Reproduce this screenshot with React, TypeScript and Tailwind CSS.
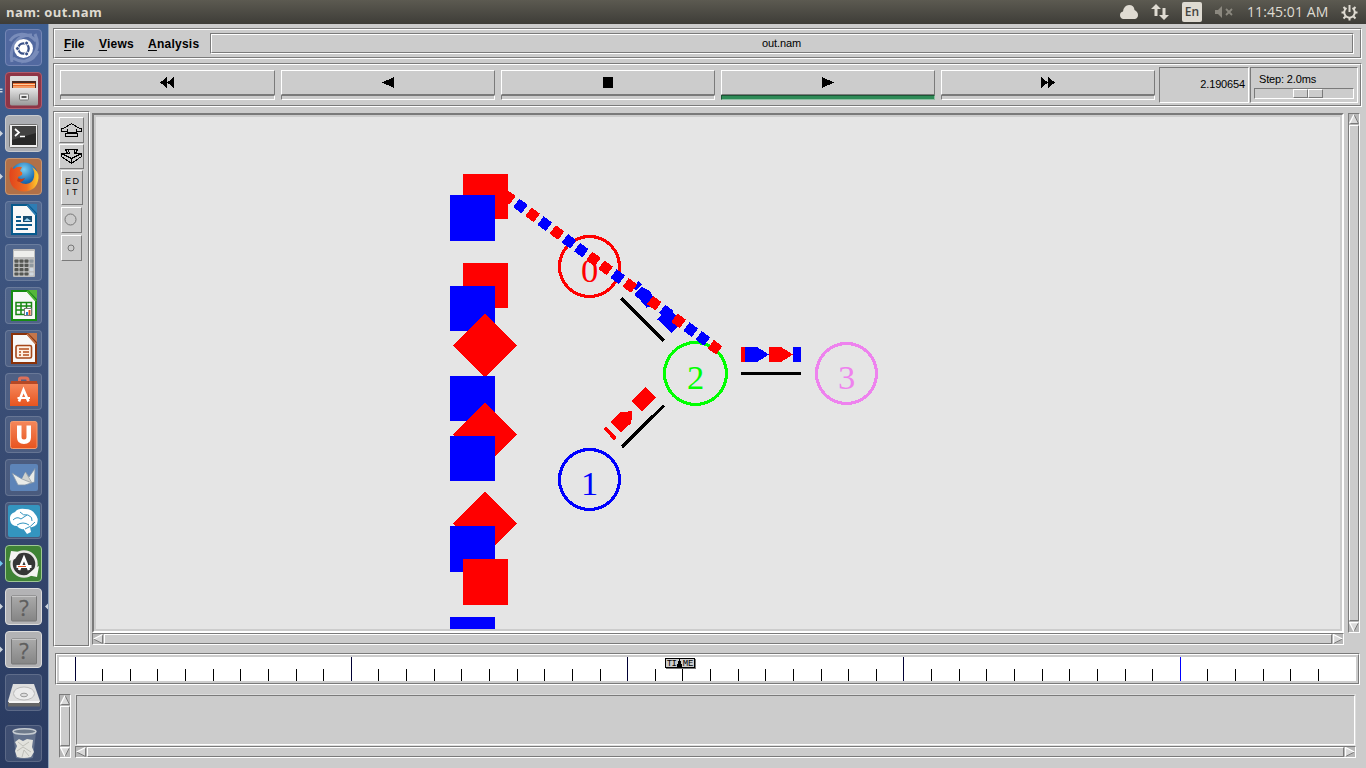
import React from "react";

const SUNK = "border border-t-[#7a7a7a] border-l-[#7a7a7a] border-b-white border-r-white";
const RAISED = "border border-t-white border-l-white border-b-[#7a7a7a] border-r-[#7a7a7a]";

function Groove({ className = "", inner = "", children }: { className?: string; inner?: string; children?: React.ReactNode }) {
  return (
    <div className={`shrink-0 ${SUNK} ${className}`}>
      <div className={`h-full w-full ${RAISED} ${inner}`}>{children}</div>
    </div>
  );
}

type Dir = "up" | "down" | "left" | "right";

function Arrow({ dir }: { dir: Dir }) {
  const shapes: Record<Dir, React.ReactNode> = {
    up: (<><path d="M5 .5L9.5 9.5H.5z" fill="#d9d9d9" /><path d="M5 .5L9.5 9.5H.5" stroke="#7a7a7a" /><path d="M5 .5L.5 9.5" stroke="#fff" strokeWidth="1.3" /></>),
    down: (<><path d="M5 9.5L9.5 .5H.5z" fill="#d9d9d9" /><path d="M5 9.5L9.5 .5" stroke="#7a7a7a" /><path d="M9.5 .5H.5L5 9.5" stroke="#fff" strokeWidth="1.3" /></>),
    left: (<><path d="M.5 5L9.5 .5V9.5z" fill="#d9d9d9" /><path d="M.5 5L9.5 9.5V.5" stroke="#7a7a7a" /><path d="M.5 5L9.5 .5" stroke="#fff" strokeWidth="1.3" /></>),
    right: (<><path d="M9.5 5L.5 .5V9.5z" fill="#d9d9d9" /><path d="M9.5 5L.5 9.5" stroke="#7a7a7a" /><path d="M9.5 5L.5 .5V9.5" stroke="#fff" strokeWidth="1.3" /></>),
  };
  return (
    <svg width="10" height="10" viewBox="0 0 10 10" fill="none" className="shrink-0">
      {shapes[dir]}
    </svg>
  );
}

function Scroll({ vertical, className = "" }: { vertical?: boolean; className?: string }) {
  return (
    <div className={`flex shrink-0 gap-px bg-[#b8b8b8] ${SUNK} ${vertical ? "w-3 flex-col" : "h-3"} ${className}`}>
      <Arrow dir={vertical ? "up" : "left"} />
      <div className={`grow bg-[#cccccc] ${RAISED}`} />
      <Arrow dir={vertical ? "down" : "right"} />
    </div>
  );
}

function Tile({ tone = "border-white/15 bg-white/10", children }: { tone?: string; children: React.ReactNode }) {
  return (
    <div className={`h-[37px] w-[37px] shrink-0 rounded-[4px] border ${tone}`}>
      <svg width="35" height="35" viewBox="1 1 35 35">{children}</svg>
    </div>
  );
}

function DocIcon({ color, dark, children }: { color: string; dark: string; children: React.ReactNode }) {
  return (
    <>
      <path d="M6 3H24L32 12V34H6z" fill={dark} />
      <path d="M8 5H22L30 14V32H8z" fill="#f8f8f8" />
      <path d="M23 3H32V12z" fill={color} />
      <path d="M22 4L31 14" stroke={color} strokeWidth="1.5" />
      {children}
    </>
  );
}

function QuestionTile() {
  return (
    <Tile tone="border-[#dcdcdc] bg-[#b3b3b5]">
      <rect x="6.5" y="8" width="25" height="25" rx="1" fill="url(#qgrad)" stroke="#777" />
      <path d="M7 8.500H31" stroke="#c8c8c8" />
      <text x="19" y="28" textAnchor="middle" fontSize="22" fill="#5e5e5e" stroke="#5e5e5e" strokeWidth=".3" fontFamily="Open Sans, sans-serif">?</text>
    </Tile>
  );
}

function Launcher() {
  return (
    <aside className="relative flex h-[744px] w-[49px] shrink-0 flex-col gap-1.5 border-r border-[#8fa3bb] bg-linear-to-b from-[#3f5f92] via-[#3c5078] via-45% to-[#293a60] pt-[5px] pl-[5px]">
      <svg width="0" height="0" className="absolute">
        <defs>
          <linearGradient id="qgrad" x1="0" y1="0" x2="0" y2="1"><stop stopColor="#aaa" /><stop offset="1" stopColor="#858585" /></linearGradient>
          <linearGradient id="cab" x1="0" y1="0" x2="0" y2="1"><stop stopColor="#e6e6e6" /><stop offset="1" stopColor="#989898" /></linearGradient>
          <radialGradient id="globe" cx=".5" cy=".25" r=".7"><stop stopColor="#79cdf0" /><stop offset=".6" stopColor="#1e70b5" /><stop offset="1" stopColor="#123a78" /></radialGradient>
          <linearGradient id="fox" x1="0" y1="0" x2="1" y2="0"><stop stopColor="#e2441c" /><stop offset=".6" stopColor="#ee7022" /><stop offset="1" stopColor="#ffd22e" /></linearGradient>
          <linearGradient id="orange" x1="0" y1="0" x2="0" y2="1"><stop stopColor="#f5875a" /><stop offset="1" stopColor="#e8541f" /></linearGradient>
        </defs>
      </svg>
      <Tile tone="border-[#7486b5] bg-[#5269a0]">
        <path d="M7 33C4 18 12 5 27 6M30 5C36 18 30 31 16 33M5 12C10 4 22 2 31 12M33 22C28 33 18 35 8 29" fill="none" stroke="#9fb0d3" strokeWidth="3" opacity=".5" />
        <circle cx="18.500" cy="19.500" r="9.500" fill="#fff" />
        <circle cx="18.500" cy="19.500" r="5.200" fill="none" stroke="#3a5188" strokeWidth="2.300" />
        <g stroke="#fff" strokeWidth="1"><circle cx="12.400" cy="19.500" r="2" fill="#3a5188" /><circle cx="21.600" cy="14.100" r="2" fill="#3a5188" /><circle cx="21.600" cy="24.900" r="2" fill="#3a5188" /></g>
      </Tile>
      <Tile tone="border-[#b05c6c] bg-[#8e3546]">
        <path d="M5 5Q5 4 6 4H32Q33 4 33 5V17H5z" fill="#ddd" />
        <rect x="7" y="9" width="24" height="8" fill="#4b2a20" />
        <path d="M8 11H30V16H8z" fill="#e8692c" /><path d="M8 12.5H30M8 15H30" stroke="#ffd0a0" />
        <path d="M5 16H33V32Q33 33.500 31 33.500H7Q5 33.500 5 32z" fill="url(#cab)" />
        <rect x="14.5" y="22" width="9" height="6" rx="1" fill="#eee" stroke="#777" /><rect x="16.5" y="24" width="5" height="2" fill="#555" />
      </Tile>
      <Tile tone="border-[#c9cace] bg-[#acaeb3]">
        <rect x="4.5" y="9.5" width="28" height="23" rx="1" fill="#eee" stroke="#707070" />
        <rect x="7" y="11" width="24" height="19" fill="#282828" /><path d="M7 11H31V18L7 25z" fill="#424242" />
        <path d="M10 14L14 17.5L10 21" fill="none" stroke="#fff" strokeWidth="1.7" /><path d="M15 21.500H20" stroke="#fff" strokeWidth="1.5" />
      </Tile>
      <Tile tone="border-[#c79774] bg-[#b17048]">
        <circle cx="19" cy="18.5" r="14" fill="url(#globe)" />
        <path d="M6 9L9 11Q12 8 17 9L15 13Q18 14 17 17L13 19Q13 26 21 26Q28 25 29 19Q30 13 27 9Q34 13 33.5 20Q32 33 19 33.5Q6 33 4.5 20Q4 13 6 9z" fill="url(#fox)" />
        <path d="M13 20Q16 22 20 20Q17 26 12 23z" fill="#c83917" />
      </Tile>
      <Tile>
        <DocIcon color="#2e7db4" dark="#075a8d"><path d="M11 16H16M11 20H16M11 24H27M11 28H23" stroke="#0e5a8b" strokeWidth="2" /><rect x="18" y="15" width="9" height="6" fill="#174d72" /><path d="M19 20L22 17L26 20z" fill="#9bd3f2" /></DocIcon>
      </Tile>
      <Tile>
        <rect x="8" y="5" width="22" height="28" rx="1" fill="#bdbdbd" /><rect x="9" y="7" width="20" height="6" fill="#eeeeec" />
        {[0, 1, 2, 3].map((r) => [0, 1, 2, 3].map((c) => (
          <rect key={`${r}-${c}`} x={9.5 + c * 5} y={15.5 + r * 4.3} width="4" height="3.2" rx=".8" fill={c === 3 ? (r > 1 ? "#cfd8df" : "#8f999f") : "#555753"} />
        )))}
      </Tile>
      <Tile>
        <DocIcon color="#55b63b" dark="#168b12"><path d="M11 15.5H26.500V27.500H11zM11 19H27M11 23H27M16 15V28M21.500 15V28" stroke="#178712" strokeWidth="1.5" fill="none" /><rect x="19.5" y="21.500" width="7" height="7" fill="#fff" stroke="#777" /><path d="M22 28V25" stroke="#2c7ccc" strokeWidth="2" /><path d="M24.5 28V23" stroke="#e4541c" strokeWidth="2" /></DocIcon>
      </Tile>
      <Tile>
        <DocIcon color="#c5764b" dark="#8b3209"><rect x="11" y="15.500" width="15.5" height="12.500" rx="1.5" fill="#fff1e4" stroke="#a6481b" strokeWidth="1.6" /><path d="M14 19H24M18 22H24M18 25H24" stroke="#b44e1c" strokeWidth="1.7" /><path d="M14 22H16M14 25H16" stroke="#b44e1c" strokeWidth="1.7" /></DocIcon>
      </Tile>
      <Tile>
        <path d="M14.500 10V6Q14.500 5 16 5H21Q23 5 23 7V10" fill="none" stroke="#dd705a" strokeWidth="3" />
        <path d="M6 8H32L33 13H5z" fill="#b54825" /><path d="M5 11H33V33H5z" fill="url(#orange)" />
        <path d="M14 28.500L18.500 17L23.500 28.500" stroke="#fff" strokeWidth="2.600" fill="none" /><path d="M12.500 25H25" stroke="#fff" strokeWidth="2" />
      </Tile>
      <Tile>
        <rect x="5.5" y="5.5" width="26.500" height="27" rx="2" fill="url(#orange)" stroke="#f59a6d" />
        <path d="M12 9.500H16.500V21Q16.500 23.5 19 23.5Q21.500 23.5 21.500 21V9.500H26V21.500Q26 28 19 28Q12 28 12 21.500z" fill="#fff" />
      </Tile>
      <Tile>
        <rect x="5" y="5" width="28" height="27" rx="2" fill="#5d84b8" />
        <path d="M7 14L17 20L20.500 13L24 18L30 9.500L29.500 23L20 26H13z" fill="#e9ebe8" stroke="#7e92a8" strokeWidth=".8" /><path d="M17 20L27 24L20.500 13" fill="#cfd2cf" stroke="#8c97a1" strokeWidth=".7" />
      </Tile>
      <Tile>
        <rect x="3" y="3" width="32" height="32" rx="2" fill="#3495bf" />
        <path d="M5 18Q4 12 10 10Q13 6 20 7Q27 7 30 12Q34 16 32 22Q29 26 25 25L26 30L22 32L18.500 27Q15 28 12 24Q6 24 5 18z" fill="#fff" />
        <path d="M8 18Q12 14 16 17L22 13M15 10Q18 14 23 13Q28 15 27 19M12 23Q18 19 24 23M20 27Q26 25 30 20" fill="none" stroke="#3495bf" />
      </Tile>
      <Tile tone="border-[#9fc894] bg-[#3f8335]">
        <circle cx="19" cy="19" r="13.5" fill="#353535" /><circle cx="19" cy="19" r="12.5" fill="none" stroke="#e8e8e4" strokeWidth="2.5" />
        <path d="M4 16L6 6L15 7L10 14zM34 21L32 32L22 30L29 24z" fill="#f4f4f2" />
        <path d="M14 25L19 13L24 25" stroke="#fff" strokeWidth="2.6" fill="none" /><path d="M11.5 21.500H26.5" stroke="#fff" strokeWidth="3" /><path d="M13 21.500H21" stroke="#e95420" />
      </Tile>
      <QuestionTile />
      <QuestionTile />
      <Tile>
        <path d="M8 10H29L35 27V31H3V27z" fill="#dedede" /><path d="M3 28H35V32.500H3z" fill="#666" /><path d="M4 27H34V29H4z" fill="#f5f5f5" />
        <ellipse cx="19" cy="19.500" rx="10.500" ry="6.5" fill="#ebebeb" stroke="#bbb" /><ellipse cx="19" cy="21" rx="3.5" ry="1.800" fill="#ddd" stroke="#999" />
      </Tile>
      <div className="mt-2">
        <Tile>
          <path d="M8 7L11 33Q19 35 28 33L31 7z" fill="#8e9bad" opacity=".45" />
          <path d="M10 17L14 14L18 16L22 14L28 15L27 22L29 27L26 32Q19 34 12 32L10 26L12 21z" fill="#e2e2dd" />
          <path d="M13 17L18 21L24 17M12 26L18 22L26 27M17 32L19 25L24 31" stroke="#b5b5ae" fill="none" strokeWidth=".8" />
          <ellipse cx="19.5" cy="6.500" rx="11.500" ry="2.800" fill="#6e7a8b" stroke="#c5cbd1" strokeWidth="1.5" />
        </Tile>
      </div>
      <svg width="49" height="744" viewBox="0 24 49 744" className="pointer-events-none absolute top-0 left-0" fill="#ccd4dd">
        <path d="M0 88.500h2.500v1.500H0zM0 91h2.500v1.500H0zM0 130.500l3 3-3 3zM0 173.500l3 3-3 3zM0 603.500l3 3-3 3zM0 646.500l3 3-3 3zM48 603.500l-3 3 3 3z" />
        <path d="M0 560.500l3 3-3 3z" fill="#71c7ec" />
      </svg>
    </aside>
  );
}

function TitleBar() {
  return (
    <header className="flex h-6 items-center justify-between bg-linear-to-b from-[#5c5a51] to-[#3e3d38] pr-2 pl-1.5 font-['Open_Sans',sans-serif] text-[#dfdbd2]">
      <span className="text-[13px] leading-6 font-bold tracking-[0.4px]">nam: out.nam</span>
      <div className="flex items-center">
        <svg width="18" height="16" viewBox="0 0 18 16" fill="#dfdbd2" className="-ml-px mr-px"><path d="M3 15Q0 14 0 11Q0 8 3 7.500Q4 1 9 1Q14 1 14.500 6Q18 8 18 11Q18 14 15 15z" /></svg>
        <svg width="18" height="16" viewBox="0 0 18 16" fill="#dfdbd2" className="mr-px ml-[12px]"><path d="M5 0L10 5H6.500V12H3.500V5H0zM11.500 4H14.500V11H18L13 16L8 11H11.500z" /></svg>
        <span className="ml-3 flex h-5 w-5 items-center justify-center rounded-[2px] bg-[#dfdbd2] text-[12px] font-semibold text-[#45443e]">En</span>
        <svg width="18" height="14" viewBox="0 0 18 14" className="ml-[13px]" fill="#8b887f"><path d="M0 5H3L7 1V13L3 9H0z" /><path d="M11 4L17 10M17 4L11 10" stroke="#8b887f" strokeWidth="1.8" /></svg>
        <span className="ml-[14px] w-[82px] text-[14px] leading-6 tracking-[0.08px] whitespace-nowrap">11:45:01 AM</span>
        <svg width="17" height="17" viewBox="0 0 17 17" className="ml-3" fill="none" stroke="#dfdbd2">
          <path d="M5.500 4A5.300 5.300 0 1 0 11.500 4" strokeWidth="2" />
          <path d="M8.500 1V8" strokeWidth="2" />
          <path d="M2.500 3L4.500 5M14.500 3L12.500 5M.5 8.500H3.500M13.500 8.500H16.500M2.500 14.500L4.500 12.500M14.500 14.500L12.500 12.500M8.500 16.500V13.500" strokeWidth="2" />
        </svg>
      </div>
    </header>
  );
}

const CONTROLS = [
  { d: "M7 0V11L0 5.500zM14 0V11L7 5.500z", w: 14, width: "w-[215px]", nudge: "-ml-0.5" },
  { d: "M12 0V11L0 5.500z", w: 12, width: "w-[214px]" },
  { d: "M0 0H10V10.500H0z", w: 10, width: "w-[214px]" },
  { d: "M0 0V11L12 5.500z", w: 12, width: "w-[214px]", active: true },
  { d: "M0 0V11L7 5.500zM7 0V11L14 5.500z", w: 14, width: "w-[214px]" },
];

function Toolbar() {
  return (
    <Groove className="mt-1 h-11 w-[1309px]" inner="flex">
      <div className="mt-[5px] ml-[5px] flex w-[1095px] shrink-0 justify-between">
        {CONTROLS.map((c, i) => (
          <button key={i} className={`block h-[30px] ${c.width}`}>
            <div className={`flex h-[25px] items-center justify-center ${RAISED}`}>
              <svg width={c.w} height="11" viewBox={`0 0 ${c.w} 11`} shapeRendering="crispEdges" className={c.nudge ?? ""}><path d={c.d} /></svg>
            </div>
            <div className={`h-[5px] ${c.active ? "border border-t-[#1c5535] border-r-[#8dbea2] border-b-[#8dbea2] border-l-[#1c5535] bg-[#2e8b57]" : SUNK}`} />
          </button>
        ))}
      </div>
      <div className={`mt-0.5 ml-1 flex h-9 w-[90px] shrink-0 items-center justify-end pr-[3px] pb-0.5 text-[11px] tracking-[-0.15px] ${SUNK}`}>2.190654</div>
      <div className={`mt-0.5 ml-px h-9 w-[108px] shrink-0 px-[3px] ${SUNK}`}>
        <div className="mt-1 ml-[5px] h-[15px] text-[11px] leading-[14px] tracking-[-0.15px] whitespace-nowrap">Step: 2.0ms</div>
        <div className={`mt-px flex h-[11px] pl-[38px] ${SUNK}`}>
          <div className={`w-[15px] ${RAISED}`} />
          <div className={`w-[15px] ${RAISED}`} />
        </div>
      </div>
    </Groove>
  );
}

function ToolPanel() {
  const btn = `flex shrink-0 items-center justify-center ${RAISED}`;
  return (
    <Groove className="h-[536px] w-[37px]" inner="flex flex-col pt-1 pl-1">
      <button className={`h-[26px] w-[25px] ${btn}`}>
        <svg width="21" height="14" viewBox="0 0 21 14" fill="none" stroke="#000" shapeRendering="crispEdges">
          <path d="M.5 8.500V5.500H2.500L10.500 .5L18.500 5.500H20.500V8.500H15.500M.5 8.500H5.500" />
          <path d="M6.500 6V9.500M15.500 6V9.500M4.500 10.500H16.500V13.500H4.500zM5.500 9.500H15.500" />
        </svg>
      </button>
      <button className={`mt-px h-[25px] w-[25px] ${btn}`}>
        <svg width="21" height="15" viewBox="0 0 21 15" fill="none" stroke="#000" shapeRendering="crispEdges">
          <path d="M4.500 .5H16.500L14.500 4.500H20.500V7.500L10.500 14.500L.5 7.500V4.500H6.500z" />
          <path d="M.5 4.500L10.500 9.500L20.500 4.500M10.500 9.500V14M7.500 1L8.500 4.500L6.500 4.500M13.500 1V4.500H15" />
        </svg>
      </button>
      <button className={`mt-px ml-0.5 h-[35px] w-[22px] flex-col pb-px text-[9px] leading-[11px] font-normal ${btn}`}>
        <span className="flex w-[14px] justify-between"><span>E</span><span>D</span></span>
        <span className="flex w-[11px] justify-between"><span>I</span><span>T</span></span>
      </button>
      <button className={`mt-0.5 ml-0.5 h-[26px] w-[21px] ${btn}`}>
        <svg width="13" height="13" className="-mt-0.5 -ml-[3px] shrink-0"><circle cx="6.500" cy="6.500" r="5.500" fill="none" stroke="#777" /></svg>
      </button>
      <button className={`mt-0.5 ml-0.5 h-[26px] w-[21px] ${btn}`}>
        <svg width="8" height="8" className="-ml-0.5"><circle cx="4" cy="4" r="3" fill="none" stroke="#777" /></svg>
      </button>
    </Groove>
  );
}

const RED = "#ff0000";
const BLUE = "#0000ff";

const DROPS: { kind: "square" | "diamond"; y: number; h?: number }[] = [
  { kind: "square", y: 174 }, { kind: "square", y: 195, h: 46 },
  { kind: "square", y: 263 }, { kind: "square", y: 286 },
  { kind: "diamond", y: 345.5 }, { kind: "square", y: 376 },
  { kind: "diamond", y: 434.5 }, { kind: "square", y: 436 },
  { kind: "diamond", y: 523.5 }, { kind: "square", y: 526, h: 46 },
  { kind: "square", y: 559, h: 46 }, { kind: "square", y: 617 },
];
const RED_SQUARES = [0, 2, 10];
const CHAIN = "rbrbrbbrrbrbrbrbbr";

const NODES = [
  { label: "0", x: 589.5, y: 266.5, r: 30, color: RED },
  { label: "1", x: 589.5, y: 479.5, r: 30, color: BLUE },
  { label: "2", x: 695.5, y: 373.5, r: 31, color: "#00ff00" },
  { label: "3", x: 846.5, y: 373.5, r: 30, color: "#ee82ee" },
];

function Network() {
  return (
    <svg width="1244" height="512" viewBox="96 117 1244 512" shapeRendering="crispEdges" className="block">
      {NODES.map((n) => (
        <g key={n.label}>
          <circle cx={n.x} cy={n.y} r={n.r} fill="none" stroke={n.color} strokeWidth="3.100" />
          <text x={n.x} y={n.y + 15} fill={n.color} fontSize="34.500" textAnchor="middle" fontFamily="Liberation Serif, serif">{n.label}</text>
        </g>
      ))}
      <g stroke="#000" strokeWidth="3.300">
        <path d="M621.500 298.500L664 341M622 447L664 405.500" />
        <path d="M741 373.500H801" strokeWidth="3" />
      </g>
      {DROPS.map((d, i) => {
        if (d.kind === "diamond") return <path key={i} d={`M485 ${d.y - 31.500}L517 ${d.y}L485 ${d.y + 31.500}L453 ${d.y}z`} fill={RED} />;
        const red = RED_SQUARES.includes(i);
        return <rect key={i} x={red ? 463 : 450} y={d.y} width="45" height={d.h ?? 45} fill={red ? RED : BLUE} />;
      })}
      <g fill={BLUE}>
        <path d="M638.500 281L642 284L636 291L633 288z" />
        <path d="M635 294L641.500 286.500L650 291L655 301L653 307L646.500 307.500z" />
        <path d="M657.500 319.500L668 308L682 322L671.500 333z" />
      </g>
      {CHAIN.split("").map((c, i) => {
        const x = 508.300 + i * 12.160;
        const y = 197.200 + i * 8.830;
        return <rect key={i} x={x - 5.250} y={y - 5.250} width="10.500" height="10.500" fill={c === "r" ? RED : BLUE} transform={`rotate(36 ${x} ${y})`} />;
      })}
      <g fill={RED}>
        <path d="M603.500 428.500L606 426.500L616 437L615.500 439.500L613.500 440z" />
        <path d="M610 422L620 412.500L632 411L631.300 423L621 432z" />
        <path d="M631 401L645.700 387L656 397.500L642 411.500z" />
        <path d="M741 347H745V362H741zM769 347H781L793 354.500L781 362H769z" />
      </g>
      <path d="M745 347H757L769 354.500L757 362H745zM793 347H801V362H793z" fill={BLUE} />
    </svg>
  );
}

function Timeline() {
  return (
    <Groove className="mt-1.5 ml-0.5 h-8 w-[1305px]" inner="p-0.5">
      <div className="h-6 bg-white">
        <svg width="1297" height="24" viewBox="59 657 1297 24" shapeRendering="crispEdges" className="block">
          {Array.from({ length: 46 }, (_, k) => {
            const x = Math.floor(75 + k * 27.632);
            const major = k % 10 === 0;
            return <rect key={k} x={x} y={major ? 657 : 669} width="1" height={major ? 24 : 12} fill={major ? (k === 40 ? "#0000ff" : "#000033") : "#000"} />;
          })}
          <rect x="666" y="659" width="30" height="10" fill="#777" />
          <rect x="665.500" y="658.500" width="29" height="9" fill="#ccc" stroke="#000" />
          <g fontSize="9" fontFamily="Liberation Mono, monospace">
            <text x="666.800" y="666" textLength="10">TI</text>
            <text x="682.800" y="666" textLength="10.500">ME</text>
          </g>
          <path d="M679 658h1v3h1v3h1v4h-5v-4h1v-3h1z" />
        </svg>
      </div>
    </Groove>
  );
}

export default function App() {
  return (
    <div className="h-[768px] w-[1366px] overflow-hidden bg-[#cccccc] font-['Liberation_Sans',sans-serif] text-black">
      <TitleBar />
      <div className="flex">
        <Launcher />
        <main className="flex h-[744px] w-[1317px] flex-col pt-1 pl-1">
          <Groove className="h-[31px] w-[1309px]" inner="flex items-start">
            <nav className="flex w-[155px] shrink-0 text-[12px] leading-[14px] font-bold">
              <span className="mt-[7px] ml-[9px] w-[35px] tracking-[-0.1px]"><u className="underline-offset-2">F</u>ile</span>
              <span className="mt-[7px] w-[49px] tracking-[0.2px]"><u className="underline-offset-2">V</u>iews</span>
              <span className="mt-[7px] tracking-[0.25px]"><u className="underline-offset-2">A</u>nalysis</span>
            </nav>
            <Groove className="mt-[3px] h-[21px] w-[1144px]" inner="flex items-center justify-center pr-px text-[11px] tracking-[-0.1px]">out.nam</Groove>
          </Groove>
          <Toolbar />
          <div className="mt-1 flex h-[536px] shrink-0">
            <ToolPanel />
            <div className="mt-0.5 ml-0.5 w-[1252px] shrink-0">
              <div className="h-[520px] border-2 border-t-[#7a7a7a] border-r-white border-b-white border-l-[#7a7a7a]">
                <div className="h-full border-2 border-[#cccccc] bg-[#e5e5e5]"><Network /></div>
              </div>
              <Scroll />
            </div>
            <Scroll vertical className="mt-0.5 ml-1 h-[520px]" />
          </div>
          <Timeline />
          <div className="mt-[9px] ml-1.5 flex h-16 shrink-0 gap-1">
            <Scroll vertical className="h-16" />
            <div className="w-[1281px] shrink-0">
              <div className="h-[52px] border border-[#dcdcdc]"><div className={`h-full ${SUNK}`} /></div>
              <Scroll />
            </div>
          </div>
        </main>
      </div>
    </div>
  );
}
